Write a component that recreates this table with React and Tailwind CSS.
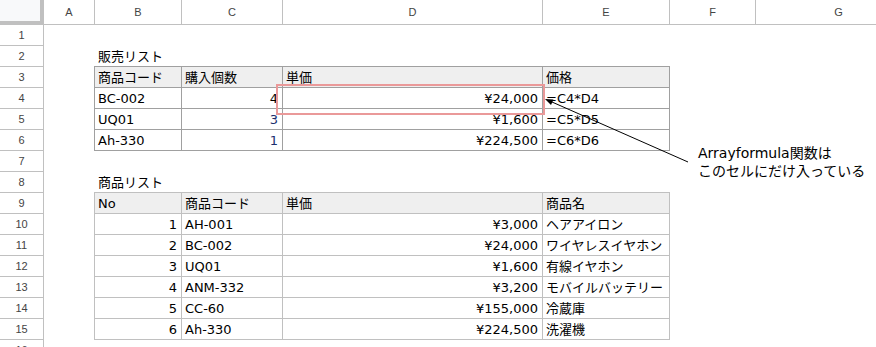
const colHeads = [
  { label: 'A', w: 'w-[51px]' },
  { label: 'B', w: 'w-[87px]' },
  { label: 'C', w: 'w-[101px]' },
  { label: 'D', w: 'w-[260px]' },
  { label: 'E', w: 'w-[127px]' },
  { label: 'F', w: 'w-[86px]' },
  { label: 'G', w: 'w-[166px]' },
];

const rowNums = Array.from({ length: 16 }, (_, i) => i + 1);

// 販売リスト
const salesHead = ['商品コード', '購入個数', '単価', '価格'];
const salesRows = [
  ['BC-002', '4', '¥24,000', '=C4*D4'],
  ['UQ01', '3', '¥1,600', '=C5*D5'],
  ['Ah-330', '1', '¥224,500', '=C6*D6'],
];

// 商品リスト
const itemHead = ['No', '商品コード', '単価', '商品名'];
const itemRows = [
  ['1', 'AH-001', '¥3,000', 'ヘアアイロン'],
  ['2', 'BC-002', '¥24,000', 'ワイヤレスイヤホン'],
  ['3', 'UQ01', '¥1,600', '有線イヤホン'],
  ['4', 'ANM-332', '¥3,200', 'モバイルバッテリー'],
  ['5', 'CC-60', '¥155,000', '冷蔵庫'],
  ['6', 'Ah-330', '¥224,500', '洗濯機'],
];

function Cell({ children, right, head, last, lastRow, line, blue }) {
  return (
    <div
      className={`flex items-center pt-px overflow-hidden whitespace-nowrap border-l border-t ${line} ${
        last ? 'border-r' : ''
      } ${lastRow ? 'h-[22px] border-b' : 'h-[21px]'} ${head ? 'bg-[#efefef]' : 'bg-white'} ${
        right ? 'justify-end pr-[4px]' : 'pl-[3px]'
      } ${blue ? 'text-[#1c2f6e]' : 'text-black'}`}
    >
      {children}
    </div>
  );
}

function Table({ head, rows, line, rightCols, blueCol, place }) {
  return (
    <div className={`${place} -ml-px -mt-px grid grid-cols-[87px_101px_260px_128px]`}>
      {head.map((h, i) => (
        <Cell key={'h' + i} head line={line} last={i === 3}>
          {h}
        </Cell>
      ))}
      {rows.map((r, ri) =>
        r.map((v, ci) => (
          <Cell
            key={ri + '-' + ci}
            line={line}
            last={ci === 3}
            lastRow={ri === rows.length - 1}
            right={rightCols.includes(ci)}
            blue={ci === blueCol && ri > 0}
          >
            {v}
          </Cell>
        ))
      )}
    </div>
  );
}

export default function App() {
  return (
    <div className="relative w-[876px] h-[347px] overflow-hidden bg-white font-['DejaVu_Sans','Noto_Sans_CJK_JP',sans-serif] text-[13px]">
      {/* column headers */}
      <div className="flex h-[25px] font-['Liberation_Sans',Arial,sans-serif] text-[11px] text-[#444]">
        <div className="w-[44px] h-[25px] shrink-0 bg-[#f8f9fa] border-r-4 border-b-4 border-[#c0c0c0]" />
        {colHeads.map((c) => (
          <div
            key={c.label}
            className={`${c.w} h-[25px] shrink-0 flex items-center justify-center border-r border-b border-[#c0c0c0]`}
          >
            {c.label}
          </div>
        ))}
      </div>

      <div className="flex">
        {/* row numbers */}
        <div className="w-[44px] shrink-0 flex flex-col font-['Liberation_Sans',Arial,sans-serif] text-[11px] text-[#444]">
          {rowNums.map((n) => (
            <div
              key={n}
              className="h-[21px] shrink-0 flex items-center justify-center border-r border-b border-[#c0c0c0]"
            >
              {n}
            </div>
          ))}
        </div>

        {/* sheet body */}
        <div className="grid grid-cols-[51px_87px_101px_260px_127px_86px_166px] grid-rows-[repeat(16,21px)] shrink-0">
          <div className="col-start-2 col-span-3 row-start-2 flex items-center pt-px pl-[3px] whitespace-nowrap">
            販売リスト
          </div>
          <Table
            place="col-start-2 col-span-4 row-start-3 row-span-4"
            head={salesHead}
            rows={salesRows}
            line="border-[#a0a0a0]"
            rightCols={[1, 2]}
            blueCol={1}
          />

          <div className="col-start-2 col-span-3 row-start-8 flex items-center pt-px pl-[3px] whitespace-nowrap">
            商品リスト
          </div>
          <Table
            place="col-start-2 col-span-4 row-start-9 row-span-7"
            head={itemHead}
            rows={itemRows}
            line="border-[#c0c0c0]"
            rightCols={[0, 2]}
            blueCol={-1}
          />
        </div>
      </div>

      {/* highlight around D4 */}
      <div className="absolute left-[276px] top-[84px] w-[269px] h-[31px] border-2 border-[#ea9999]" />

      {/* callout arrow */}
      <svg className="absolute left-0 top-0 pointer-events-none" width="876" height="347">
        <line x1="688" y1="162" x2="552" y2="102" stroke="#000" strokeWidth="1" />
        <polygon points="545,99 553.5,99.4 551,105" fill="#000" />
      </svg>

      <div className="absolute left-[698px] top-[144px] text-[14px] leading-[18px] text-black whitespace-nowrap">
        <div>Arrayformula関数は</div>
        <div>このセルにだけ入っている</div>
      </div>
    </div>
  );
}
